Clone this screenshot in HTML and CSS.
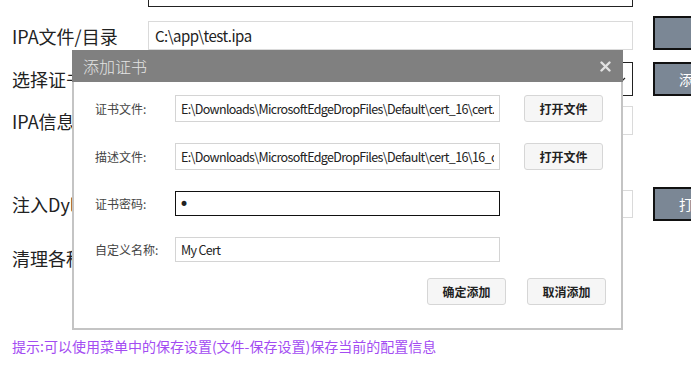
FILE: index.html
```html
<!DOCTYPE html>
<html lang="zh-CN">

<head>
  <meta charset="UTF-8">
  <meta name="viewport" content="width=device-width, initial-scale=1.0">
  <title>IPA 签名工具</title>
  <link rel="stylesheet" href="styles.css">
</head>

<body>
  <div class="page">
    <div class="form">
      <div class="row row-top">
        <span class="label"></span>
        <input class="field field-dark" type="text" value="" readonly>
      </div>

      <div class="row row-ipa">
        <span class="label">IPA文件/目录</span>
        <input class="field" type="text" value="C:\app\test.ipa" readonly>
        <button class="side-button side-button-far">选择文件</button>
      </div>

      <div class="row row-cert">
        <span class="label">选择证书</span>
        <div class="field field-dark select">
          <svg class="select-arrow" width="10" height="6" viewBox="0 0 10 6">
            <path d="M1 1 L5 5 L9 1" fill="none" stroke="#222" stroke-width="1.2" />
          </svg>
        </div>
        <button class="side-button">添加证书</button>
      </div>

      <div class="row row-info">
        <span class="label">IPA信息</span>
        <input class="field" type="text" value="" readonly>
      </div>

      <div class="row row-dylib">
        <span class="label">注入Dylib</span>
        <input class="field field-short" type="text" value="" readonly>
        <button class="side-button">打开文件</button>
      </div>

      <div class="row row-clean">
        <span class="label">清理各种缓存</span>
      </div>
    </div>

    <p class="tip">提示:可以使用菜单中的保存设置(文件-保存设置)保存当前的配置信息</p>

    <!-- modal dialog on top of the form -->
    <div class="dialog">
      <div class="dialog-title">
        <span>添加证书</span>
        <svg class="close-icon" width="11" height="11" viewBox="0 0 11 11">
          <path d="M1.5 1.5 L9.5 9.5 M9.5 1.5 L1.5 9.5" stroke="#e2e2e2" stroke-width="2.4" stroke-linecap="round" />
        </svg>
      </div>
      <div class="dialog-body">
        <div class="dialog-row">
          <span class="dialog-label">证书文件:</span>
          <input class="dialog-input" type="text" value="E:\Downloads\MicrosoftEdgeDropFiles\Default\cert_16\cert.p12" readonly>
          <button class="light-button">打开文件</button>
        </div>
        <div class="dialog-row">
          <span class="dialog-label">描述文件:</span>
          <input class="dialog-input" type="text" value="E:\Downloads\MicrosoftEdgeDropFiles\Default\cert_16\16_cert.mobileprovision" readonly>
          <button class="light-button">打开文件</button>
        </div>
        <div class="dialog-row dialog-row-small">
          <span class="dialog-label">证书密码:</span>
          <input class="dialog-input dialog-input-focus" type="password" value="1">
        </div>
        <div class="dialog-row dialog-row-small">
          <span class="dialog-label">自定义名称:</span>
          <input class="dialog-input" type="text" value="My Cert">
        </div>
        <div class="dialog-actions">
          <button class="light-button">确定添加</button>
          <button class="light-button">取消添加</button>
        </div>
      </div>
    </div>
  </div>
</body>

</html>
```

FILE: styles.css
```css
body {
  font-family: "Noto Sans CJK SC", "Noto Sans", sans-serif;
  margin: 0;
  padding: 0;
  background-color: #fff;
  color: #222;
  overflow: hidden;
}

.page {
  position: relative;
  width: 691px;
  height: 381px;
  overflow: hidden;
}

.form {
  margin-top: -22px;
}

.row {
  display: flex;
  align-items: center;
}

.label {
  box-sizing: border-box;
  flex-shrink: 0;
  width: 148px;
  padding-left: 12px;
  font-size: 18px;
  white-space: nowrap;
}

.field {
  box-sizing: border-box;
  flex-shrink: 0;
  width: 485px;
  height: 100%;
  margin: 0;
  padding: 0 6px;
  border: 1px solid #dadada;
  background-color: #fff;
  font-family: inherit;
  font-size: 15px;
  letter-spacing: -0.5px;
  color: #222;
  outline: none;
}

.field-dark {
  border: 1px solid #222;
}

.field-short {
  height: 28px;
}

.select {
  position: relative;
}

.select-arrow {
  position: absolute;
  right: 6px;
  top: 14px;
}

.side-button {
  box-sizing: border-box;
  flex-shrink: 0;
  width: 110px;
  height: 34px;
  margin-left: 20px;
  padding: 0 0 0 24px;
  text-align: left;
  white-space: nowrap;
  background-color: #7b8795;
  color: #fff;
  border: 2px solid #111;
  font-family: inherit;
  font-size: 14px;
}

.side-button-far {
  padding-left: 60px;
}

.row-top {
  height: 29px;
}

.row-ipa {
  height: 29px;
  margin-top: 14px;
}

.row-ipa .side-button {
  align-self: flex-end;
}

.row-cert {
  height: 34px;
  margin-top: 12px;
}

.row-info {
  height: 29px;
  margin-top: 10px;
}

.row-dylib {
  height: 34px;
  margin-top: 52px;
}

.row-clean {
  height: 26px;
  margin-top: 24px;
}

.tip {
  margin: 65px 0 0 12px;
  font-size: 14px;
  line-height: 20px;
  color: #a34cf2;
}

.dialog {
  position: absolute;
  left: 72px;
  top: 50px;
  width: 551px;
  height: 280px;
  display: flex;
  flex-direction: column;
}

.dialog-title {
  height: 32px;
  flex-shrink: 0;
  display: flex;
  justify-content: space-between;
  align-items: center;
  padding: 0 12px 0 11px;
  background-color: #808080;
  color: #e4e4e4;
  font-size: 16px;
  font-weight: 300;
}

.dialog-body {
  flex: 1;
  background-color: #fff;
  border: 2px solid #c4c4c4;
  border-top: none;
  padding: 13px 15px 0 21px;
}

.dialog-row {
  display: flex;
  align-items: center;
  height: 27px;
  margin-bottom: 21px;
}

.dialog-row-small {
  height: 25px;
}

.dialog-label {
  width: 80px;
  flex-shrink: 0;
  font-size: 12px;
  color: #444;
  white-space: nowrap;
}

.dialog-input {
  box-sizing: border-box;
  flex-shrink: 0;
  width: 325px;
  height: 100%;
  margin: 0;
  padding: 0 5px;
  border: 1px solid #d4d4d4;
  background-color: #fff;
  font-family: inherit;
  font-size: 12.5px;
  letter-spacing: -0.65px;
  color: #222;
  outline: none;
}

.dialog-input-focus {
  border: 1px solid #111;
  font-family: "DejaVu Sans", sans-serif;
  font-size: 17px;
  letter-spacing: 0;
  padding-left: 3px;
}

.light-button {
  box-sizing: border-box;
  flex-shrink: 0;
  width: 79px;
  height: 27px;
  margin-left: 24px;
  background-color: #f6f6f6;
  border: 1px solid #d6d6d6;
  border-radius: 3px;
  font-family: inherit;
  font-size: 12px;
  font-weight: bold;
  color: #222;
}

.dialog-actions {
  display: flex;
  justify-content: flex-end;
  margin-top: -5px;
}

.dialog-actions .light-button {
  margin-left: 21px;
}
```
